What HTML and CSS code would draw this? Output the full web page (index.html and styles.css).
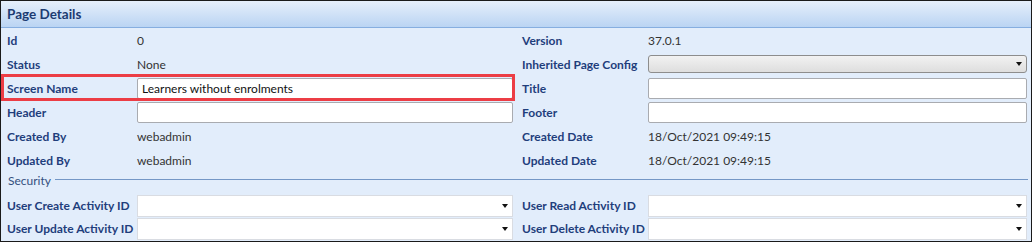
FILE: index.html
```html
<!DOCTYPE html>
<html>
<head>
<meta charset="utf-8">
<link rel="stylesheet" href="styles.css">
</head>
<body>
<div class="panel">
  <div class="panel-head">Page Details</div>
  <div class="panel-body">
    <div class="row">
      <div class="field"><span class="label">Id</span><span class="value">0</span></div>
      <div class="field right"><span class="label">Version</span><span class="value">37.0.1</span></div>
    </div>
    <div class="row">
      <div class="field"><span class="label">Status</span><span class="value">None</span></div>
      <div class="field right"><span class="label">Inherited Page Config</span><div class="combo"><span class="arrow"></span></div></div>
    </div>
    <div class="row">
      <div class="field highlight"><span class="label">Screen Name</span><div class="input">Learners without enrolments</div></div>
      <div class="field right"><span class="label">Title</span><div class="input"></div></div>
    </div>
    <div class="row">
      <div class="field"><span class="label">Header</span><div class="input"></div></div>
      <div class="field right"><span class="label">Footer</span><div class="input"></div></div>
    </div>
    <div class="row">
      <div class="field"><span class="label">Created By</span><span class="value">webadmin</span></div>
      <div class="field right"><span class="label">Created Date</span><span class="value">18/Oct/2021 09:49:15</span></div>
    </div>
    <div class="row">
      <div class="field"><span class="label">Updated By</span><span class="value">webadmin</span></div>
      <div class="field right"><span class="label">Updated Date</span><span class="value">18/Oct/2021 09:49:15</span></div>
    </div>
    <div class="legend"><span class="legend-text">Security</span><span class="legend-line"></span></div>
    <div class="row sec">
      <div class="field"><span class="label">User Create Activity ID</span><div class="select"><span class="arrow"></span></div></div>
      <div class="field right"><span class="label">User Read Activity ID</span><div class="select"><span class="arrow"></span></div></div>
    </div>
    <div class="row sec">
      <div class="field"><span class="label">User Update Activity ID</span><div class="select"><span class="arrow"></span></div></div>
      <div class="field right"><span class="label">User Delete Activity ID</span><div class="select"><span class="arrow"></span></div></div>
    </div>
  </div>
</div>
</body>
</html>
```

FILE: styles.css
```css
* { box-sizing: border-box; }
html, body { margin: 0; padding: 0; background: #ffffff; }
body { font-family: Lato, "Liberation Sans", sans-serif; font-size: 12px; }

.panel {
  width: 1032px;
  height: 242px;
  border: 1px solid #1a1a1a;
  background: #e2edfb;
  overflow: hidden;
}

.panel-head {
  height: 27px;
  padding-left: 6px;
  display: flex;
  align-items: center;
  font-weight: 700;
  font-size: 13.5px;
  color: #1c3b72;
  background: linear-gradient(#e6effb, #bad4f3);
  border-bottom: 1px solid #86aee0;
}

.panel-body { padding-left: 6px; }

.row {
  display: flex;
  height: 24px;
  align-items: center;
}
.row.sec { height: 23px; }

.field {
  display: flex;
  align-items: center;
  width: 506px;
  height: 100%;
  position: relative;
}
.field.right { margin-left: 9px; width: 505px; }

.label {
  width: 130px;
  flex: none;
  font-weight: 700;
  color: #1f3e7c;
  white-space: nowrap;
}
.field.right .label { width: 126px; }

.value { color: #333; }

.input, .select, .combo {
  flex: 1;
  height: 21px;
  background: #fff;
  border: 1px solid #a9abb0;
  border-radius: 2px;
  display: flex;
  align-items: center;
  padding-left: 4px;
  color: #111;
  position: relative;
}
.sec .select { height: 22px; border-color: #d9dce2; border-radius: 0; }

.combo {
  height: 18px;
  background: linear-gradient(#f2f2f2, #dedede);
  border-color: #8d8d8d;
  border-radius: 3px;
}

.arrow {
  position: absolute;
  right: 4px;
  top: 50%;
  margin-top: -2px;
  width: 0;
  height: 0;
  border-left: 3.5px solid transparent;
  border-right: 3.5px solid transparent;
  border-top: 4px solid #111;
}

.highlight::after {
  content: "";
  position: absolute;
  left: -6px;
  right: -2px;
  top: -2px;
  bottom: -1px;
  border: 3px solid #ec3d45;
  pointer-events: none;
}

.legend {
  height: 22px;
  display: flex;
  align-items: center;
  padding-bottom: 6px;
}
.legend-text {
  color: #34507e;
  padding-left: 1px;
  padding-right: 4px;
}
.legend-line {
  flex: 1;
  height: 1px;
  background: #7497c6;
  margin-right: 3px;
  margin-top: -1px;
}
```
